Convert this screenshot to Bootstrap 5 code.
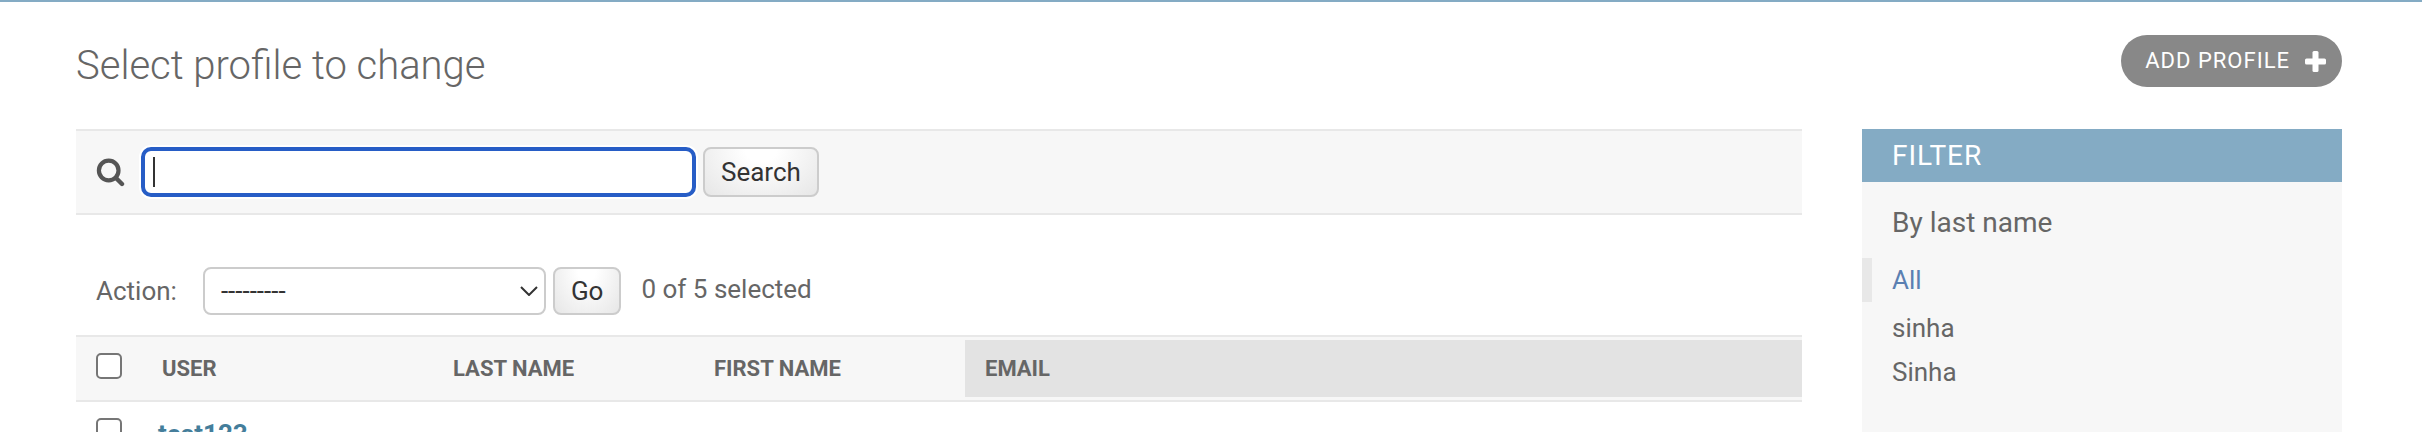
<!DOCTYPE html>
<html lang="en">
<head>
<meta charset="utf-8">
<meta name="viewport" content="width=device-width, initial-scale=1">
<title>Select profile to change</title>
<link href="https://cdn.jsdelivr.net/npm/bootstrap@5.3.0/dist/css/bootstrap.min.css" rel="stylesheet">
<style>
  :root { --accent: #84abc4; --hairline: #e8e8e8; --soft: #f7f7f7; --ink: #666; --dark: #333; }
  body { font-family: Roboto, "Liberation Sans", sans-serif; font-size: 26px; line-height: 32px; color: var(--ink); background: #fff; }
  .shell { border-top: 2px solid var(--accent); padding: 33px 80px 0 76px; }
  .page-title { font-size: 40px; line-height: 48px; font-weight: 300; padding-top: 7px; }
  .title-row { margin-bottom: 39px; }
  .btn-add { height: 52px; padding: 0 16px 0 24px; gap: 15px; background: #888; color: #fff; font-size: 22px; line-height: 32px; letter-spacing: 1px; }
  .btn-add:hover { background: #417690; color: #fff; }
  .columns { gap: 60px; }
  .search-bar { height: 86px; padding: 0 20px; background: var(--soft); border-top: 2px solid var(--hairline); border-bottom: 2px solid var(--hairline); }
  .search-box { width: 555px; height: 50px; margin-left: 16px; margin-right: 7px; padding: 0 12px; font-size: 26px; line-height: 32px; color: var(--dark); border: 4px solid #275dc6; border-radius: 10px; outline: 0; box-shadow: 0 0 0 2px #fff; caret-color: transparent;
    background: linear-gradient(#333, #333) 8px center / 2px 30px no-repeat #fff; }
  .btn-plain { padding: 0 16px; font-size: 26px; line-height: 32px; color: var(--dark); border: 2px solid #ccc; border-radius: 8px; background: radial-gradient(ellipse at 50% 0, #fff 20%, #ddd 130%); }
  .btn-search { height: 50px; }
  .actions { padding: 52px 20px 20px; }
  .action-select { width: 343px; height: 48px; margin-left: 26px; margin-right: 7px; padding: 0 60px 0 16px; font-size: 26px; line-height: 32px; color: var(--dark); border: 2px solid #ccc; border-radius: 8px;
    background-image: url("data:image/svg+xml,%3Csvg xmlns='http://www.w3.org/2000/svg' viewBox='0 0 18 10'%3E%3Cpath d='M1 1l8 8 8-8' fill='none' stroke='%23333' stroke-width='2'/%3E%3C/svg%3E"); background-size: 18px 10px; background-position: right 6px center; }
  .btn-go { height: 48px; }
  .counter { margin-left: 20px; padding-bottom: 4px; }
  .results { --bs-table-bg: transparent; color: var(--ink); table-layout: fixed; border-color: var(--hairline); }
  .results th, .results td { border: 0; padding: 0 20px; }
  .results thead tr { height: 65px; background: var(--soft); border-top: 2px solid var(--hairline); border-bottom: 2px solid var(--hairline); }
  .results thead th { font-size: 22px; line-height: 32px; font-weight: 700; text-transform: uppercase; vertical-align: middle; }
  .results thead th.sorted { background: linear-gradient(#e3e3e3, #e3e3e3) 0 center / 100% 57px no-repeat; }
  .results tbody th, .results tbody td { height: 66px; padding: 16px 16px; vertical-align: top; }
  .results tbody td:first-child { padding-left: 20px; }
  .results a { color: #447e9b; font-weight: 700; text-decoration: none; }
  .tick { width: 26px; height: 26px; margin: 0; border: 2px solid #767676; border-radius: 5px !important; vertical-align: top; }
  .c-tick { width: 66px; } .c-user { width: 291px; } .c-last { width: 261px; } .c-first { width: 271px; }
  .filter { width: 480px; background: var(--soft); min-height: 100vh; }
  .filter h2 { height: 53px; padding: 0 30px; font-size: 28px; line-height: 53px; letter-spacing: 1px; font-weight: 400; color: #fff; background: var(--accent); }
  .filter h3 { padding: 24px 30px 18px; font-size: 28px; line-height: 34px; font-weight: 400; }
  .filter li { padding: 0 20px; margin-bottom: 4px; border-left: 10px solid transparent; }
  .filter li a { display: block; line-height: 40px; color: var(--ink); text-decoration: none; }
  .filter li.selected { border-left-color: var(--hairline); margin-bottom: 6px; }
  .filter li.selected a { line-height: 44px; color: #5b80b2; }
</style>
</head>
<body>
<div class="shell vh-100 overflow-hidden">
  <div class="title-row d-flex justify-content-between align-items-start">
    <h1 class="page-title m-0">Select profile to change</h1>
    <a href="#" class="btn-add btn rounded-pill border-0 d-flex align-items-center">ADD PROFILE
      <svg width="21" height="21" viewBox="0 0 21 21" aria-hidden="true"><rect x="7.500" y="0" width="6" height="21" rx="1.500" fill="#fff"/><rect x="0" y="7.500" width="21" height="6" rx="1.500" fill="#fff"/></svg>
    </a>
  </div>
  <div class="columns d-flex align-items-start">
    <main class="flex-grow-1">
      <form class="search-bar d-flex align-items-center" role="search" onsubmit="return false">
        <label for="searchbar" class="d-flex"><svg width="29" height="29" viewBox="0 0 29 29" aria-label="Search" role="img"><circle cx="12.700" cy="12.500" r="9.800" fill="none" stroke="#555" stroke-width="4.200"/><path d="M20 20l6 6" stroke="#555" stroke-width="4.400" stroke-linecap="round"/></svg></label>
        <input type="text" id="searchbar" class="search-box">
        <button type="submit" class="btn-plain btn-search">Search</button>
      </form>
      <form class="actions d-flex align-items-center" onsubmit="return false">
        <label for="action">Action:</label>
        <select id="action" class="form-select action-select"><option>---------</option><option>Delete selected profiles</option></select>
        <button type="submit" class="btn-plain btn-go">Go</button>
        <span class="counter">0 of 5 selected</span>
      </form>
      <table class="results table m-0">
        <colgroup><col class="c-tick"><col class="c-user"><col class="c-last"><col class="c-first"><col></colgroup>
        <thead>
          <tr>
            <th scope="col"><input type="checkbox" class="form-check-input tick" aria-label="Select all"></th>
            <th scope="col">User</th><th scope="col">Last name</th><th scope="col">First name</th><th scope="col" class="sorted">Email</th>
          </tr>
        </thead>
        <tbody>
          <tr>
            <td><input type="checkbox" class="form-check-input tick" aria-label="Select test123"></td>
            <th scope="row"><a href="#">test123</a></th><td></td><td></td><td></td>
          </tr>
        </tbody>
      </table>
    </main>
    <aside class="filter flex-shrink-0">
      <h2 class="m-0">FILTER</h2>
      <h3 class="m-0">By last name</h3>
      <ul class="list-unstyled m-0">
        <li class="selected"><a href="#">All</a></li>
        <li><a href="#">sinha</a></li>
        <li><a href="#">Sinha</a></li>
      </ul>
    </aside>
  </div>
</div>
<script src="https://cdn.jsdelivr.net/npm/bootstrap@5.3.0/dist/js/bootstrap.bundle.min.js"></script>
</body>
</html>
